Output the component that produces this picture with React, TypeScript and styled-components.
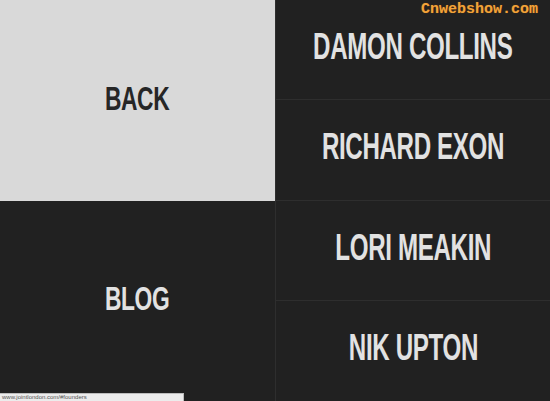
import React from 'react'
import styled, { createGlobalStyle } from 'styled-components'

const GlobalStyle = createGlobalStyle`
  html, body {
    margin: 0;
    padding: 0;
    height: 100%;
    background: #212121;
    overflow: hidden;
  }
  #root {
    height: 100%;
  }
`

const Page = styled.div`
  position: relative;
  display: grid;
  grid-template-columns: 275px minmax(0, 1fr);
  width: 550px;
  height: 401px;
  background: #212121;
  font-family: "Liberation Sans", Arial, sans-serif;
`

const LeftColumn = styled.div`
  display: grid;
  grid-template-rows: 201px 1fr;
  min-width: 0;
`

const RightColumn = styled.div`
  display: grid;
  grid-template-rows: 100px 101px 100px 1fr;
  min-width: 0;
  border-left: 1px solid #2e2e2e;
`

const Tile = styled.a<{ light?: boolean; big?: boolean }>`
  display: flex;
  align-items: center;
  justify-content: center;
  min-width: 0;
  overflow: visible;
  background: ${({ light }) => (light ? '#d9d9d9' : '#212121')};
  color: ${({ light }) => (light ? '#262626' : '#e2e2e2')};
  text-decoration: none;
  border-bottom: ${({ big }) => (big ? 'none' : '1px solid #2e2e2e')};
  &:last-child {
    border-bottom: none;
  }
`

const Label = styled.span<{ size?: number }>`
  display: inline-block;
  flex: none;
  font-weight: 700;
  font-size: ${({ size }) => size ?? 36}px;
  line-height: 1;
  letter-spacing: -0.5px;
  white-space: nowrap;
  transform: scaleX(0.67);
  margin-top: -6px;
`

const Watermark = styled.div`
  position: absolute;
  top: 1px;
  right: 12px;
  font-family: "Liberation Mono", "DejaVu Sans Mono", monospace;
  font-size: 15px;
  font-weight: 700;
  color: #f2a33a;
  text-shadow: 0 0 1px #7a4a10;
`

const StatusBar = styled.div`
  position: absolute;
  left: 0;
  bottom: 0;
  width: 181px;
  height: 7px;
  padding-left: 2px;
  background: #ececec;
  border-top: 1px solid #bdbdbd;
  border-right: 1px solid #bdbdbd;
  font-family: "Liberation Sans", Arial, sans-serif;
  font-size: 6px;
  line-height: 7px;
  color: #555;
  overflow: hidden;
`

const founders = ['DAMON COLLINS', 'RICHARD EXON', 'LORI MEAKIN', 'NIK UPTON']

export default function App() {
  return (
    <>
      <GlobalStyle />
      <Page>
        <LeftColumn>
          <Tile light big href="#back">
            <Label size={34}>BACK</Label>
          </Tile>
          <Tile big href="#blog">
            <Label size={34}>BLOG</Label>
          </Tile>
        </LeftColumn>
        <RightColumn>
          {founders.map(name => (
            <Tile key={name} href="#founders">
              <Label>{name}</Label>
            </Tile>
          ))}
        </RightColumn>
        <Watermark>Cnwebshow.com</Watermark>
        <StatusBar>www.jointlondon.com/#founders</StatusBar>
      </Page>
    </>
  )
}
